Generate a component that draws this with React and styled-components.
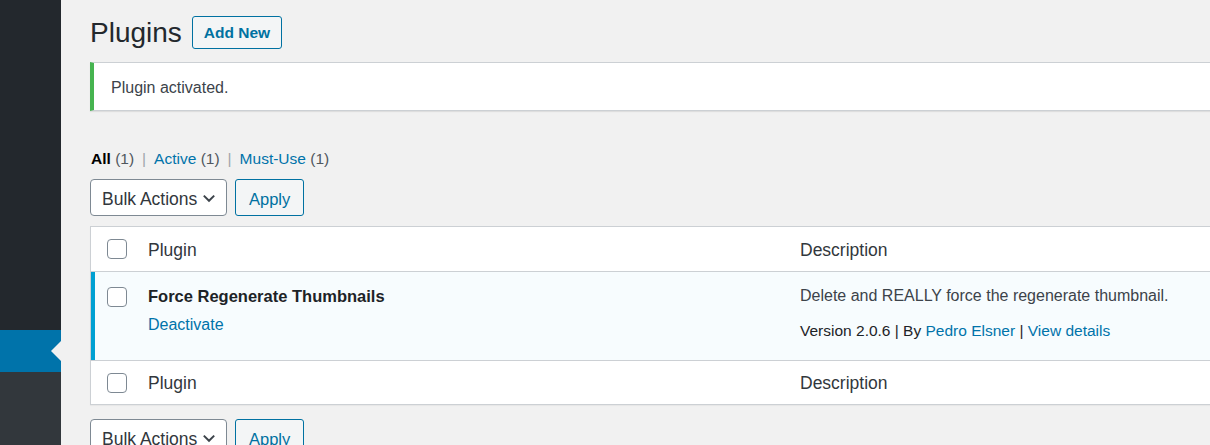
import React from 'react'
import styled, { createGlobalStyle } from 'styled-components'

const Global = createGlobalStyle`
  html, body {
    margin: 0;
    padding: 0;
    background: #f1f1f1;
    overflow: hidden;
  }
  body {
    font-family: 'Liberation Sans', Arial, sans-serif;
    color: #23282d;
  }
`

const Layout = styled.div`
  display: flex;
  min-height: 445px;
  width: 1260px;
`

const Sidebar = styled.div`
  width: 61px;
  flex-shrink: 0;
  display: flex;
  flex-direction: column;
  background: #23282d;
`

const SideSpacer = styled.div`
  height: 330px;
`

const SideActive = styled.div`
  height: 42px;
  background: #0073aa;
  position: relative;
  &:after {
    content: '';
    position: absolute;
    right: 0;
    top: 11px;
    border-style: solid;
    border-width: 10px 10px 10px 0;
    border-color: transparent #f1f1f1 transparent transparent;
  }
`

const SideRest = styled.div`
  flex: 1;
  background: #32373c;
`

const Main = styled.div`
  flex: 1;
  padding: 16px 0 0 29px;
`

const HeadingRow = styled.div`
  display: flex;
  align-items: center;
  gap: 10px;
  height: 33px;
`

const Title = styled.h1`
  margin: 0;
  font-size: 28px;
  font-weight: 400;
  color: #23282d;
  line-height: 33px;
`

const Button = styled.button`
  font-family: inherit;
  font-size: ${p => (p.strong ? '15.5px' : '16.5px')};
  font-weight: ${p => (p.strong ? 600 : 400)};
  color: #0071a1;
  background: #f3f5f6;
  border: 1px solid #0071a1;
  border-radius: 3px;
  height: ${p => p.h || 37}px;
  padding: ${p => (p.strong ? '0' : '3px')} ${p => p.px || 11}px 0;
  cursor: pointer;
`

const Notice = styled.div`
  margin-top: 13px;
  height: 49px;
  background: #fff;
  border-left: 4px solid #46b450;
  box-shadow: 0 1px 1px rgba(0, 0, 0, 0.08);
  border-top: 1px solid #ccd0d4;
  border-bottom: 1px solid #ccd0d4;
  box-sizing: border-box;
  display: flex;
  align-items: center;
  padding: 2px 0 0 17px;
  font-size: 16px;
  color: #3c434a;
`

const Filters = styled.div`
  margin-top: 38px;
  display: flex;
  align-items: center;
  gap: 8px;
  font-size: 15.5px;
  height: 20px;
  color: #50575e;
  padding-left: 1px;
`

const FilterItem = styled.span`
  color: ${p => (p.current ? '#000' : '#0073aa')};
  font-weight: ${p => (p.current ? 600 : 400)};
  span {
    color: #50575e;
    font-weight: 400;
  }
`

const Sep = styled.span`
  color: #a0a5aa;
`

const Actions = styled.div`
  margin-top: ${p => p.mt}px;
  display: flex;
  gap: 8px;
  align-items: center;
`

const Select = styled.div`
  height: 37px;
  box-sizing: border-box;
  width: 137px;
  border: 1px solid #7e8993;
  border-radius: 4px;
  background: #fff;
  display: flex;
  align-items: center;
  justify-content: space-between;
  padding: 3px 9px 0 11px;
  font-size: 17.5px;
  color: #32373c;
  svg {
    margin-top: -3px;
  }
`

const Table = styled.div`
  margin-top: 10px;
  background: #fff;
  border: 1px solid #ccd0d4;
  box-shadow: 0 1px 1px rgba(0, 0, 0, 0.04);
`

const Row = styled.div`
  display: grid;
  grid-template-columns: 57px 652px 1fr;
  min-height: ${p => p.h}px;
  box-sizing: border-box;
  background: ${p => (p.active ? '#f7fcfe' : '#fff')};
  border-top: ${p => (p.divider ? '1px solid #ccd0d4' : 'none')};
  box-shadow: ${p => (p.active ? 'inset 4px 0 0 #00a0d2' : 'none')};
  align-items: ${p => (p.active ? 'start' : 'center')};
`

const CheckCell = styled.div`
  display: flex;
  padding-left: 16px;
  padding-top: ${p => p.pt || 0}px;
`

const Box = styled.span`
  width: 20px;
  height: 20px;
  box-sizing: border-box;
  border: 1px solid #7e8993;
  border-radius: 4px;
  background: #fff;
`

const HeadCell = styled.div`
  font-size: 17.5px;
  color: #32373c;
  padding-top: 2px;
`

const Cell = styled.div`
  padding-top: 13px;
  font-size: 16px;
  color: #3c434a;
`

const PluginName = styled.div`
  font-size: 16.5px;
  font-weight: 700;
  color: #1d2327;
  line-height: 22px;
`

const Link = styled.a`
  color: #0073aa;
  text-decoration: none;
`

const RowLink = styled(Link)`
  display: block;
  margin-top: 8px;
  font-size: 16px;
  line-height: 20px;
`

const Desc = styled.div`
  line-height: 22px;
  color: #3c434a;
`

const Meta = styled.div`
  margin-top: 13px;
  line-height: 22px;
  font-size: 15.5px;
  color: #1d2327;
`

const Chevron = () => (
  <svg width="16" height="16" viewBox="0 0 20 20" fill="none">
    <path d="M3.5 7l6.5 6.5 6.5-6.5" stroke="#3c434a" strokeWidth="2.4" />
  </svg>
)

const BulkBar = ({ mt }) => (
  <Actions mt={mt}>
    <Select>
      Bulk Actions <Chevron />
    </Select>
    <Button px={13}>Apply</Button>
  </Actions>
)

export default function App() {
  return (
    <>
      <Global />
      <Layout>
        <Sidebar>
          <SideSpacer />
          <SideActive />
          <SideRest />
        </Sidebar>
        <Main>
          <HeadingRow>
            <Title>Plugins</Title>
            <Button strong h={33} px={11}>Add New</Button>
          </HeadingRow>
          <Notice>Plugin activated.</Notice>
          <Filters>
            <FilterItem current>All <span>(1)</span></FilterItem>
            <Sep>|</Sep>
            <FilterItem>Active <span>(1)</span></FilterItem>
            <Sep>|</Sep>
            <FilterItem>Must-Use <span>(1)</span></FilterItem>
          </Filters>
          <BulkBar mt={10} />
          <Table>
            <Row h={44}>
              <CheckCell><Box /></CheckCell>
              <HeadCell>Plugin</HeadCell>
              <HeadCell>Description</HeadCell>
            </Row>
            <Row h={89} active divider>
              <CheckCell pt={15}><Box /></CheckCell>
              <Cell>
                <PluginName>Force Regenerate Thumbnails</PluginName>
                <RowLink href="#">Deactivate</RowLink>
              </Cell>
              <Cell>
                <Desc>Delete and REALLY force the regenerate thumbnail.</Desc>
                <Meta>
                  Version 2.0.6 | By <Link href="#">Pedro Elsner</Link> | <Link href="#">View details</Link>
                </Meta>
              </Cell>
            </Row>
            <Row h={44} divider>
              <CheckCell><Box /></CheckCell>
              <HeadCell>Plugin</HeadCell>
              <HeadCell>Description</HeadCell>
            </Row>
          </Table>
          <BulkBar mt={14} />
        </Main>
      </Layout>
    </>
  )
}
